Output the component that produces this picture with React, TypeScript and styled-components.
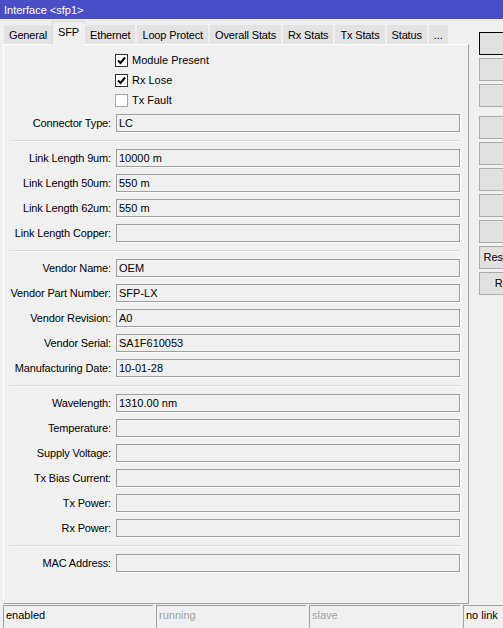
import styled, { createGlobalStyle } from "styled-components";

const GlobalStyle = createGlobalStyle`
  html, body {
    margin: 0;
    padding: 0;
    background: #f0f0f0;
    overflow: hidden;
  }
  body {
    font-family: "Liberation Sans", Arial, sans-serif;
    font-size: 11px;
    color: #000;
  }
`;

const tabs = [
  "General",
  "SFP",
  "Ethernet",
  "Loop Protect",
  "Overall Stats",
  "Rx Stats",
  "Tx Stats",
  "Status",
  "...",
];

type Field = { label: string; value?: string };

const sections: Field[][] = [
  [
    { label: "Link Length 9um", value: "10000 m" },
    { label: "Link Length 50um", value: "550 m" },
    { label: "Link Length 62um", value: "550 m" },
    { label: "Link Length Copper" },
  ],
  [
    { label: "Vendor Name", value: "OEM" },
    { label: "Vendor Part Number", value: "SFP-LX" },
    { label: "Vendor Revision", value: "A0" },
    { label: "Vendor Serial", value: "SA1F610053" },
    { label: "Manufacturing Date", value: "10-01-28" },
  ],
  [
    { label: "Wavelength", value: "1310.00 nm" },
    { label: "Temperature" },
    { label: "Supply Voltage" },
    { label: "Tx Bias Current" },
    { label: "Tx Power" },
    { label: "Rx Power" },
  ],
  [{ label: "MAC Address" }],
];

// only the start of the longer labels shows, the rest is past the window edge
const buttonGroups = [
  ["OK", "Cancel", "Apply"],
  ["Disable", "Comment", "Copy", "Remove", "Torch", "Reset MAC Address", "Reset Counters"],
];

const Window = styled.div`
  width: 503px;
  height: 628px;
  display: flex;
  flex-direction: column;
  overflow: hidden;
`;

const TitleBar = styled.div`
  height: 19px;
  background: #4a4ec6;
  color: #fff;
  font-size: 11px;
  line-height: 20px;
  padding-left: 4px;
  flex-shrink: 0;
`;

const Body = styled.div`
  display: flex;
  padding-top: 2px;
  flex: 1;
`;

const Main = styled.div`
  width: 466px;
  flex-shrink: 0;
  margin-left: 3px;
  display: flex;
  flex-direction: column;
`;

const TabStrip = styled.div`
  display: flex;
  align-items: flex-end;
  height: 24px;
  position: relative;
  z-index: 1;
  margin-bottom: -1px;
`;

const Tab = styled.div<{ $active?: boolean }>`
  height: ${(p) => (p.$active ? 24 : 21)}px;
  line-height: 21px;
  padding: 0 5px;
  box-sizing: border-box;
  background: ${(p) => (p.$active ? "#f0f0f0" : "#e3e3e3")};
  border: 1px solid ${(p) => (p.$active ? "#d9d9d9" : "#f0f0f0")};
  border-bottom: ${(p) => (p.$active ? "none" : "1px solid #ffffff")};
  margin: ${(p) => (p.$active ? "0 -1px" : "0")};
  white-space: nowrap;
  letter-spacing: -0.15px;
`;

const Panel = styled.div`
  height: 560px;
  box-sizing: border-box;
  border-top: 1px solid #ffffff;
  border-left: 1px solid #ffffff;
  border-right: 1px solid #a0a0a0;
  border-bottom: 1px solid #a0a0a0;
  padding-top: 5px;
`;

const CheckRow = styled.div`
  height: 20px;
  display: flex;
  align-items: center;
  padding-left: 111px;
  gap: 4px;
`;

const Box = styled.span<{ $checked?: boolean }>`
  width: 13px;
  height: 13px;
  box-sizing: border-box;
  border: 1px solid ${(p) => (p.$checked ? "#333333" : "#a8a8a8")};
  background: #fff;
  display: inline-flex;
  align-items: center;
  justify-content: center;
`;

const FieldRow = styled.div`
  height: 25px;
  display: grid;
  grid-template-columns: 107px 344px;
  column-gap: 5px;
  align-items: center;
`;

const Label = styled.div`
  text-align: right;
  white-space: nowrap;
  letter-spacing: -0.15px;
`;

const Input = styled.div`
  height: 18px;
  box-sizing: border-box;
  border: 1px solid #a0a0a0;
  box-shadow: 1px 1px 0 #ffffff;
  padding-left: 2px;
  line-height: 16px;
  white-space: nowrap;
`;

const Separator = styled.div`
  height: 10px;
  display: flex;
  align-items: center;
  padding: 0 7px 0 6px;
  &::after {
    content: "";
    flex: 1;
    height: 1px;
    background: #dadada;
    box-shadow: 0 1px 0 #fafafa;
  }
`;

const ButtonColumn = styled.div`
  flex-shrink: 0;
  margin-left: 10px;
  padding-top: 11px;
  display: flex;
  flex-direction: column;
  gap: 9px;
`;

const ButtonGroup = styled.div`
  display: flex;
  flex-direction: column;
  gap: 3px;
`;

const Button = styled.div<{ $default?: boolean }>`
  width: 108px;
  height: 23px;
  box-sizing: border-box;
  background: #e1e1e1;
  border: 1px solid ${(p) => (p.$default ? "#000000" : "#adadad")};
  text-align: center;
  line-height: 21px;
  white-space: nowrap;
`;

const StatusBar = styled.div`
  display: flex;
  gap: 3px;
  padding: 1px 0 0 3px;
  height: 23px;
  flex-shrink: 0;
`;

const StatusCell = styled.div<{ $w?: number; $dim?: boolean }>`
  width: ${(p) => (p.$w ? `${p.$w}px` : "auto")};
  flex: ${(p) => (p.$w ? "none" : "1")};
  box-sizing: border-box;
  border-top: 1px solid #a0a0a0;
  border-left: 1px solid #a0a0a0;
  padding: 3px 0 0 2px;
  color: ${(p) => (p.$dim ? "#a0a0a0" : "#000")};
  white-space: nowrap;
`;

const Check = () => (
  <svg width="11" height="11" viewBox="0 0 11 11">
    <path d="M2 5.5 L4.5 8 L9 2.5" fill="none" stroke="#000" strokeWidth="2" />
  </svg>
);

const checks = [
  { label: "Module Present", checked: true },
  { label: "Rx Lose", checked: true },
  { label: "Tx Fault", checked: false },
];

export default function App() {
  return (
    <>
      <GlobalStyle />
      <Window>
        <TitleBar>Interface &lt;sfp1&gt;</TitleBar>
        <Body>
          <Main>
            <TabStrip>
              {tabs.map((t) => (
                <Tab key={t} $active={t === "SFP"}>
                  {t}
                </Tab>
              ))}
            </TabStrip>
            <Panel>
              {checks.map((c) => (
                <CheckRow key={c.label}>
                  <Box $checked={c.checked}>{c.checked && <Check />}</Box>
                  <span>{c.label}</span>
                </CheckRow>
              ))}
              <FieldRow>
                <Label>Connector Type:</Label>
                <Input>LC</Input>
              </FieldRow>
              {sections.map((sec, i) => (
                <div key={i}>
                  <Separator />
                  {sec.map((f) => (
                    <FieldRow key={f.label}>
                      <Label>{f.label}:</Label>
                      <Input>{f.value}</Input>
                    </FieldRow>
                  ))}
                </div>
              ))}
            </Panel>
          </Main>
          <ButtonColumn>
            {buttonGroups.map((g, i) => (
              <ButtonGroup key={i}>
                {g.map((b) => (
                  <Button key={b} $default={b === "OK"}>
                    {b}
                  </Button>
                ))}
              </ButtonGroup>
            ))}
          </ButtonColumn>
        </Body>
        <StatusBar>
          <StatusCell $w={150}>enabled</StatusCell>
          <StatusCell $w={150} $dim>
            running
          </StatusCell>
          <StatusCell $w={151} $dim>
            slave
          </StatusCell>
          <StatusCell>no link</StatusCell>
        </StatusBar>
      </Window>
    </>
  );
}
